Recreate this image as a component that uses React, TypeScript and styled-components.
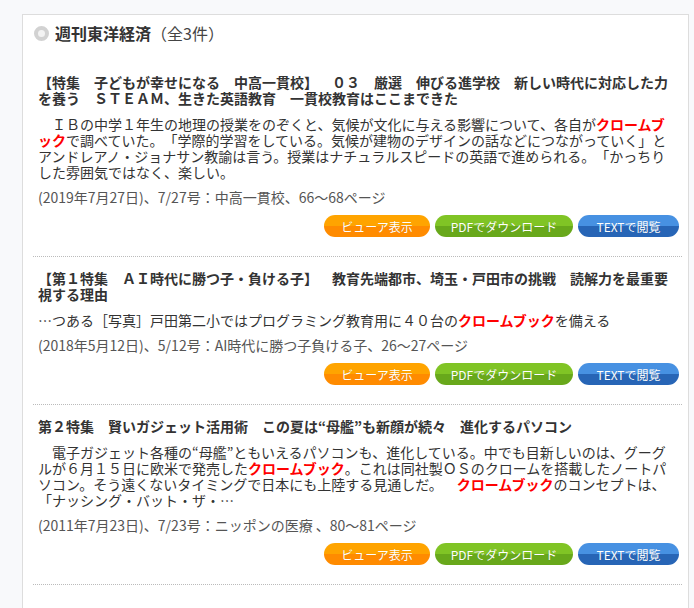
import React from 'react';
import styled, { createGlobalStyle } from 'styled-components';

const GlobalStyle = createGlobalStyle`
  body {
    margin: 0;
    background: #f8f9fb;
    font-family: Meiryo, "Noto Sans CJK JP", "Liberation Sans", sans-serif;
    color: #333;
    text-spacing-trim: space-all;
  }
`;

const Page = styled.div`
  padding: 14px 5px 0 22px;
`;

const Panel = styled.section`
  background: #fff;
  border: 1px solid #ddd;
  border-bottom: none;
  padding: 0 6px 40px 10px;
`;

const Header = styled.h2`
  display: flex;
  align-items: center;
  gap: 6px;
  margin: 0 0 10px;
  padding: 0 0 0 1px;
  height: 36px;
  font-size: 16px;
  font-weight: bold;
  color: #333;
`;

const Ring = styled.span`
  width: 15px;
  height: 15px;
  box-sizing: border-box;
  border-radius: 50%;
  border: 4px solid #d2d2d2;
  background: #f3f3f3;
`;

const Count = styled.span`
  font-weight: normal;
  font-size: 16px;
  color: #444;
`;

const Item = styled.article<{ $first?: boolean; $last?: boolean }>`
  padding: 13px 5px 19px;
  border-top: ${(p) => (p.$first ? 'none' : '1px dotted #bbb')};
  border-bottom: ${(p) => (p.$last ? '1px dotted #bbb' : 'none')};
`;

const Title = styled.h3`
  margin: 0 0 10px;
  font-size: 14px;
  line-height: 16px;
  font-weight: bold;
  color: #333;
`;

const Body = styled.p`
  margin: 0 0 9px;
  font-size: 14px;
  line-height: 16px;
  color: #333;
`;

const Hit = styled.b`
  color: #f00;
  line-height: 16px;
`;

const Meta = styled.p`
  margin: 0 0 10px;
  font-size: 14px;
  line-height: 16px;
  color: #555;
`;

const Actions = styled.div`
  display: flex;
  justify-content: flex-end;
  gap: 5px;
  margin-right: -2px;
`;

const tones = {
  orange: ['#ffa400', '#ff8b00'],
  green: ['#80c425', '#68a81b'],
  blue: ['#4791e2', '#2765b6'],
};

const Button = styled.a<{ $tone: keyof typeof tones; $w: number }>`
  display: flex;
  align-items: center;
  justify-content: center;
  width: ${(p) => p.$w}px;
  height: 22px;
  border-radius: 11px;
  background: linear-gradient(
    ${(p) => tones[p.$tone][0]} 0,
    ${(p) => tones[p.$tone][0]} 50%,
    ${(p) => tones[p.$tone][1]} 50%,
    ${(p) => tones[p.$tone][1]} 100%
  );
  color: #fff;
  font-size: 12px;
  text-shadow: 0 0 1px rgba(0, 0, 0, 0.15);
  text-decoration: none;
  cursor: pointer;
`;

type Article = {
  title: React.ReactNode;
  body: React.ReactNode;
  meta: string;
};

const SP = '\u3000';

const articles: Article[] = [
  {
    title:
      '【特集　子どもが幸せになる　中高一貫校】　０３　厳選　伸びる進学校　新しい時代に対応した力を養う　ＳＴＥＡＭ、生きた英語教育　一貫校教育はここまできた',
    body: (
      <>
        {SP}ＩＢの中学１年生の地理の授業をのぞくと、気候が文化に与える影響について、各自が<Hit>クロームブック</Hit>で調べていた。「学際的学習をしている。気候が建物のデザインの話などにつながっていく」とアンドレアノ・ジョナサン教諭は言う。授業はナチュラルスピードの英語で進められる。「かっちりした雰囲気ではなく、楽しい。
      </>
    ),
    meta: '(2019年7月27日)、7/27号：中高一貫校、66〜68ページ',
  },
  {
    title:
      '【第１特集　ＡＩ時代に勝つ子・負ける子】　教育先端都市、埼玉・戸田市の挑戦　読解力を最重要視する理由',
    body: (
      <>
        …つある［写真］戸田第二小ではプログラミング教育用に４０台の<Hit>クロームブック</Hit>を備える
      </>
    ),
    meta: '(2018年5月12日)、5/12号：AI時代に勝つ子負ける子、26〜27ページ',
  },
  {
    title: '第２特集　賢いガジェット活用術　この夏は“母艦”も新顔が続々　進化するパソコン',
    body: (
      <>
        {SP}電子ガジェット各種の“母艦”ともいえるパソコンも、進化している。中でも目新しいのは、グーグルが６月１５日に欧米で発売した<Hit>クロームブック</Hit>。これは同社製ＯＳのクロームを搭載したノートパソコン。そう遠くないタイミングで日本にも上陸する見通しだ。{SP}<Hit>クロームブック</Hit>のコンセプトは、「ナッシング・バット・ザ・…
      </>
    ),
    meta: '(2011年7月23日)、7/23号：ニッポンの医療 、80〜81ページ',
  },
];

export default function App() {
  return (
    <Page>
      <GlobalStyle />
      <Panel>
        <Header>
          <Ring />
          <span>
            週刊東洋経済<Count>（全3件）</Count>
          </span>
        </Header>
        {articles.map((a, i) => (
          <Item key={i} $first={i === 0} $last={i === articles.length - 1}>
            <Title>{a.title}</Title>
            <Body>{a.body}</Body>
            <Meta>{a.meta}</Meta>
            <Actions>
              <Button $tone="orange" $w={106}>ビューア表示</Button>
              <Button $tone="green" $w={138}>PDFでダウンロード</Button>
              <Button $tone="blue" $w={101}>TEXTで閲覧</Button>
            </Actions>
          </Item>
        ))}
      </Panel>
    </Page>
  );
}
